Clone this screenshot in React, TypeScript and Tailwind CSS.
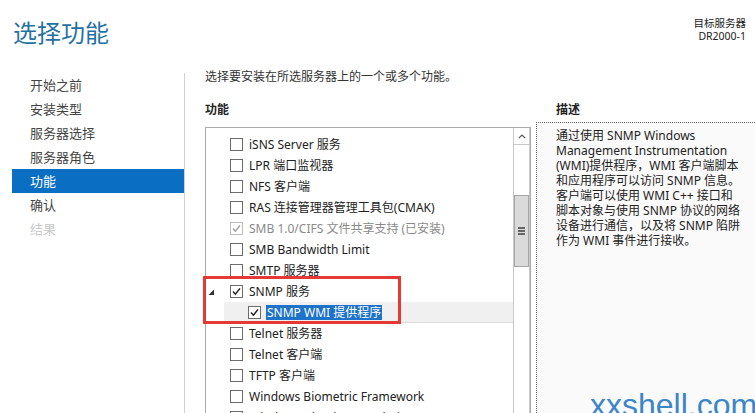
import React from "react";

type Row = {
  label: string;
  checked?: boolean;
  disabled?: boolean;
  expand?: boolean;
  child?: boolean;
};

const rows: Row[] = [
  { label: "iSNS Server 服务" },
  { label: "LPR 端口监视器" },
  { label: "NFS 客户端" },
  { label: "RAS 连接管理器管理工具包(CMAK)" },
  { label: "SMB 1.0/CIFS 文件共享支持 (已安装)", checked: true, disabled: true },
  { label: "SMB Bandwidth Limit" },
  { label: "SMTP 服务器" },
  { label: "SNMP 服务", checked: true, expand: true },
  { label: "SNMP WMI 提供程序", checked: true, child: true },
  { label: "Telnet 服务器" },
  { label: "Telnet 客户端" },
  { label: "TFTP 客户端" },
  { label: "Windows Biometric Framework" },
  { label: "Windows Identity Foundation 3.5" },
];

function Check({ checked, disabled }: { checked?: boolean; disabled?: boolean }) {
  return (
    <div
      className={
        "w-[13px] h-[13px] shrink-0 border bg-white flex items-center justify-center " +
        (disabled ? "border-[#bdbdbd]" : "border-[#6b6b6b]")
      }
    >
      {checked && (
        <svg width="11" height="11" viewBox="0 0 11 11">
          <path
            d="M2 5.6 L4.4 8.2 L9 2.4"
            fill="none"
            stroke={disabled ? "#a0a0a0" : "#222"}
            strokeWidth="1.5"
          />
        </svg>
      )}
    </div>
  );
}

const navItems = ["开始之前", "安装类型", "服务器选择", "服务器角色", "功能", "确认", "结果"];

export default function App() {
  return (
    <div className="relative w-[755px] h-[413px] overflow-hidden bg-white text-[#222] font-['Noto_Sans','Noto_Sans_CJK_SC',sans-serif]">
      {/* header */}
      <div className="flex justify-between items-start h-[69px]">
        <div className="pl-[13px] pt-[17px] text-[24px] leading-[32px] text-[#2471a3]">选择功能</div>
        <div className="pr-[9px] pt-[17px] text-right text-[10.5px] leading-[13px] text-[#222]">
          <div>目标服务器</div>
          <div>DR2000-1</div>
        </div>
      </div>

      {/* body */}
      <div className="flex h-[344px]">
        <div className="w-[185px] shrink-0 mt-[4px] border-r border-[#d0d0d0] pl-[12px] text-[13px]">
          {navItems.map((n, i) => (
            <div
              key={n}
              className={
                "h-[24px] leading-[24px] pl-[18px] " +
                (i === 4 ? "bg-[#0a6fc2] text-white" : i === 6 ? "text-[#c9c9c9]" : "text-[#444]")
              }
            >
              {n}
            </div>
          ))}
        </div>

        <div className="flex-1 pl-[20px] flex flex-col">
          <div className="text-[12px] leading-[16px] text-[#333]">选择要安装在所选服务器上的一个或多个功能。</div>
          <div className="flex flex-1">
            {/* features column */}
            <div className="w-[326px] shrink-0 flex flex-col">
              <div className="mt-[17px] text-[12px] leading-[16px] font-bold">功能</div>
              <div className="mt-[9px] flex-1 flex border border-[#ababab] bg-white">
                <div className="flex-1 pt-[6px] text-[12px] text-[#222]">
                  {rows.map((r) => {
                    if (r.child) {
                      return (
                        <div
                          key={r.label}
                          className="ml-[18px] h-[21px] flex items-center pl-[24px] bg-[#f0f0f0] border-b border-[#dcdcdc]"
                        >
                          <Check checked />
                          <span className="ml-[5px] px-[1px] leading-[15px] bg-[#1e72c8] text-white">{r.label}</span>
                        </div>
                      );
                    }
                    return (
                      <div key={r.label} className={"h-[21px] flex items-center " + (r.expand ? "pl-[2px]" : "pl-[24px]")}>
                        {r.expand && (
                          <svg width="7" height="7" viewBox="0 0 7 7" className="mr-[15px] mt-[2px]">
                            <polygon points="6,0.5 6,6 0.5,6" fill="#333" />
                          </svg>
                        )}
                        <Check checked={r.checked} disabled={r.disabled} />
                        <span className={"ml-[6px] whitespace-nowrap " + (r.disabled ? "text-[#8a8a8a]" : "")}>
                          {r.label}
                        </span>
                      </div>
                    );
                  })}
                </div>
                {/* scrollbar */}
                <div className="w-[17px] shrink-0 border-l border-r border-[#c8c8c8] flex flex-col">
                  <div className="h-[17px] border-b border-[#c8c8c8] flex items-center justify-center">
                    <svg width="8" height="5" viewBox="0 0 8 5">
                      <path d="M0.8 4.2 L4 1 L7.2 4.2" fill="none" stroke="#555" strokeWidth="1.2" />
                    </svg>
                  </div>
                  <div className="mt-[50px] h-[72px] border border-[#a6a6a6] bg-[#dadada] flex flex-col items-center justify-center gap-[1px]">
                    <div className="w-[7px] h-[2px] bg-[#666]" />
                    <div className="w-[7px] h-[2px] bg-[#666]" />
                    <div className="w-[7px] h-[2px] bg-[#666]" />
                  </div>
                </div>
              </div>
            </div>

            {/* description column */}
            <div className="ml-[5px] flex-1 flex flex-col">
              <div className="mt-[17px] pl-[20px] text-[12px] leading-[16px] font-bold">描述</div>
              <div className="mt-[4px] flex-1 border-t border-l border-dotted border-[#666] bg-[#fafafa] pl-[19px] pt-[5px] text-[12px] leading-[15px] text-[#222] whitespace-nowrap">
                通过使用 SNMP Windows
                <br />
                Management Instrumentation
                <br />
                (WMI)提供程序，WMI 客户端脚本
                <br />
                和应用程序可以访问 SNMP 信息。
                <br />
                客户端可以使用 WMI C++ 接口和
                <br />
                脚本对象与使用 SNMP 协议的网络
                <br />
                设备进行通信，以及将 SNMP 陷阱
                <br />
                作为 WMI 事件进行接收。
              </div>
            </div>
          </div>
        </div>
      </div>

      {/* red annotation box */}
      <div className="absolute left-[203px] top-[276px] w-[198px] h-[48px] border-[3px] border-[#e53935]" />

      {/* watermark */}
      <div className="absolute left-[590px] top-[389px] text-[32px] leading-none text-[#3a86c8] font-['Liberation_Sans',sans-serif] whitespace-nowrap">
        xxshell.com
      </div>
    </div>
  );
}
